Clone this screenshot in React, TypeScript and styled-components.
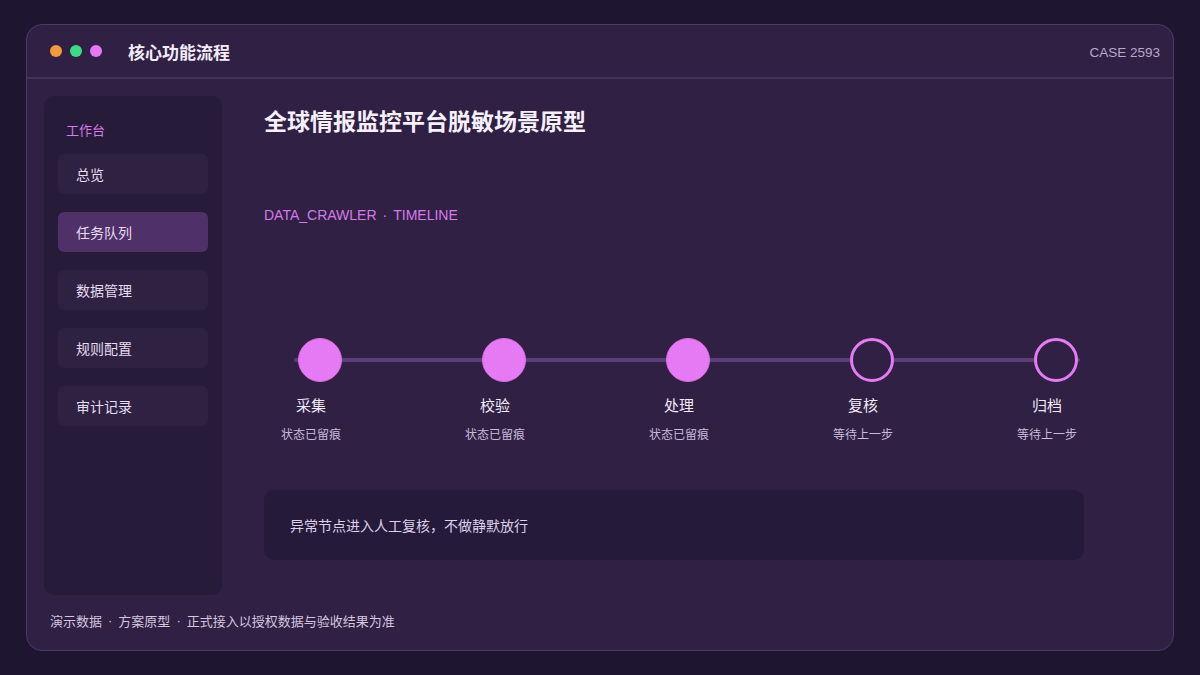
import React from "react";
import styled, { createGlobalStyle } from "styled-components";

const Global = createGlobalStyle`
  html, body { margin: 0; padding: 0; background: #1e1630; }
  body { font-family: "Liberation Sans", "Noto Sans CJK SC", "Noto Sans", sans-serif; }
  * { box-sizing: border-box; }
`;

const Page = styled.div`
  width: 1200px;
  height: 675px;
  padding: 24px 26px 24px 26px;
  background: #1e1630;
`;

const Card = styled.div`
  height: 627px;
  background: #2f2044;
  border: 1px solid #4b3968;
  border-radius: 16px;
  display: flex;
  flex-direction: column;
  overflow: hidden;
`;

const Header = styled.div`
  height: 54px;
  flex: none;
  display: flex;
  align-items: center;
  padding: 0 13px 0 23px;
  border-bottom: 2px solid #42325c;
`;

const Dots = styled.div`
  display: flex;
  gap: 8px;
  margin-right: 26px;
`;

const Dot = styled.span<{ $c: string }>`
  width: 12px;
  height: 12px;
  border-radius: 50%;
  background: ${(p) => p.$c};
`;

const HeaderTitle = styled.div`
  font-size: 17px;
  font-weight: 700;
  color: #f3ecfa;
  flex: 1;
`;

const CaseTag = styled.div`
  font-size: 13.5px;
  color: #b8a8cc;
  margin-top: 2px;
`;

const Body = styled.div`
  flex: 1;
  display: grid;
  grid-template-columns: 178px 1fr;
  column-gap: 42px;
  padding: 17px 18px 0 17px;
  min-height: 0;
`;

const Sidebar = styled.div`
  height: 499px;
  background: #271b3a;
  border-radius: 10px;
  padding: 26px 14px 0 14px;
  display: flex;
  flex-direction: column;
  gap: 18px;
`;

const SideLabel = styled.div`
  font-size: 13px;
  line-height: 18px;
  color: #d77ae8;
  padding-left: 8px;
  margin-bottom: -4px;
`;

const NavItem = styled.div<{ $active?: boolean }>`
  height: 40px;
  border-radius: 6px;
  display: flex;
  align-items: center;
  padding-left: 18px;
  font-size: 14px;
  color: #e6dcf0;
  background: ${(p) => (p.$active ? "#4f3069" : "#2e2142")};
`;

const Main = styled.div`
  padding-top: 12px;
  display: flex;
  flex-direction: column;
`;

const Title = styled.h1`
  margin: 0;
  font-size: 23px;
  line-height: 28px;
  font-weight: 700;
  color: #f6f0fb;
`;

const Sub = styled.div`
  margin-top: 70px;
  font-size: 14px;
  line-height: 18px;
  color: #d77ae8;
`;

const Sep = styled.span`
  display: inline-block;
  margin: 0 6px;
`;

const Timeline = styled.div`
  position: relative;
  margin-top: 114px;
  width: 820px;
`;

const Track = styled.div`
  position: absolute;
  left: 30px;
  width: 786px;
  top: 20px;
  height: 4px;
  border-radius: 2px;
  background: #5c3e78;
`;

const Steps = styled.div`
  position: relative;
  display: flex;
  gap: 84px;
  margin-left: -3px;
`;

const Step = styled.div`
  flex: none;
  width: 100px;
  display: flex;
  flex-direction: column;
  align-items: center;
`;

const Node = styled.div<{ $done: boolean }>`
  width: 44px;
  height: 44px;
  border-radius: 50%;
  margin-left: 18px;
  background: ${(p) => (p.$done ? "#e67af5" : "#2f2044")};
  border: ${(p) => (p.$done ? "1px solid #d86ce8" : "3px solid #e67af5")};
`;

const StepName = styled.div`
  margin-top: 14px;
  font-size: 15px;
  line-height: 20px;
  color: #f1e9f8;
`;

const StepState = styled.div`
  margin-top: 11px;
  font-size: 12px;
  line-height: 16px;
  color: #c9bbd8;
`;

const Note = styled.div`
  margin-top: 47px;
  width: 820px;
  height: 70px;
  border-radius: 10px;
  background: #261a3b;
  display: flex;
  align-items: center;
  padding-left: 26px;
  font-size: 14px;
  color: #ddd0e9;
`;

const Footer = styled.div`
  height: 56px;
  flex: none;
  display: flex;
  align-items: center;
  padding-left: 23px;
  padding-bottom: 4px;
  font-size: 13px;
  color: #d3c6df;
`;

const steps = [
  { name: "采集", state: "状态已留痕", done: true },
  { name: "校验", state: "状态已留痕", done: true },
  { name: "处理", state: "状态已留痕", done: true },
  { name: "复核", state: "等待上一步", done: false },
  { name: "归档", state: "等待上一步", done: false },
];

const nav = ["总览", "任务队列", "数据管理", "规则配置", "审计记录"];

export default function App() {
  return (
    <>
      <Global />
      <Page>
        <Card>
          <Header>
            <Dots>
              <Dot $c="#f5993d" />
              <Dot $c="#3ddc84" />
              <Dot $c="#e67af5" />
            </Dots>
            <HeaderTitle>核心功能流程</HeaderTitle>
            <CaseTag>CASE 2593</CaseTag>
          </Header>
          <Body>
            <Sidebar>
              <SideLabel>工作台</SideLabel>
              {nav.map((n) => (
                <NavItem key={n} $active={n === "任务队列"}>
                  {n}
                </NavItem>
              ))}
            </Sidebar>
            <Main>
              <Title>全球情报监控平台脱敏场景原型</Title>
              <Sub>
                DATA_CRAWLER<Sep>·</Sep>TIMELINE
              </Sub>
              <Timeline>
                <Track />
                <Steps>
                  {steps.map((s) => (
                    <Step key={s.name}>
                      <Node $done={s.done} />
                      <StepName>{s.name}</StepName>
                      <StepState>{s.state}</StepState>
                    </Step>
                  ))}
                </Steps>
              </Timeline>
              <Note>异常节点进入人工复核，不做静默放行</Note>
            </Main>
          </Body>
          <Footer>
            演示数据<Sep>·</Sep>方案原型<Sep>·</Sep>正式接入以授权数据与验收结果为准
          </Footer>
        </Card>
      </Page>
    </>
  );
}
